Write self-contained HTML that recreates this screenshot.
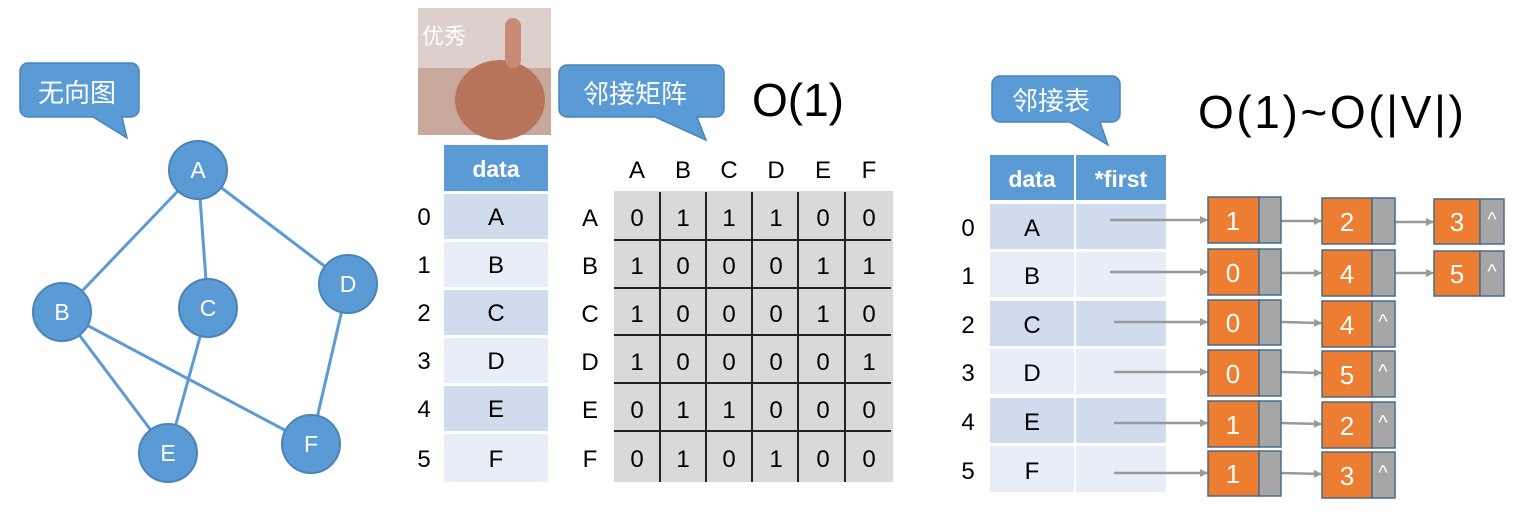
<!DOCTYPE html>
<html><head><meta charset="utf-8"><style>
html,body{margin:0;padding:0;background:#fff;width:1536px;height:518px;overflow:hidden}
text{font-family:"Liberation Sans","Noto Sans CJK SC",sans-serif}
</style></head><body>
<svg width="1536" height="518" viewBox="0 0 1536 518" xmlns="http://www.w3.org/2000/svg">
<defs><marker id="ar" markerWidth="8" markerHeight="8" refX="7" refY="4" orient="auto" markerUnits="userSpaceOnUse"><path d="M0,0 L8,4 L0,8 Z" fill="#999"/></marker></defs>
<g fill="#5b9bd5" stroke="#4a84b8" stroke-width="1.5">
<path d="M28,63 H131 a8,8 0 0 1 8,8 V109 a8,8 0 0 1 -8,8 H122 L127,138 L93,117 H28 a8,8 0 0 1 -8,-8 V71 a8,8 0 0 1 8,-8Z"/>
<path d="M567,65 H716 a8,8 0 0 1 8,8 V109 a8,8 0 0 1 -8,8 H697 L706,140 L655,117 H567 a8,8 0 0 1 -8,-8 V73 a8,8 0 0 1 8,-8Z"/>
<path d="M1000,76 H1112 a8,8 0 0 1 8,8 V114 a8,8 0 0 1 -8,8 H1100 L1108,145 L1070,122 H1000 a8,8 0 0 1 -8,-8 V84 a8,8 0 0 1 8,-8Z"/>
</g>
<g fill="#fff" font-size="26">
<text x="38" y="102">无向图</text>
<text x="583" y="103">邻接矩阵</text>
<text x="1012" y="110">邻接表</text>
</g>
<text x="752" y="116" font-size="46">O(1)</text>
<text x="1198" y="128" font-size="46" letter-spacing="2.6">O(1)~O(|V|)</text>
<rect x="418" y="8" width="133" height="127" fill="#c9a89c"/>
<rect x="418" y="8" width="133" height="60" fill="#ddd0cc"/>
<ellipse cx="500" cy="100" rx="45" ry="40" fill="#b8745a"/>
<rect x="505" y="18" width="16" height="50" rx="8" fill="#c98a75"/>
<text x="422" y="44" font-size="22" fill="#fff">优秀</text>
<g stroke="#5b9bd5" stroke-width="3">
<line x1="198" y1="170" x2="62" y2="312"/><line x1="198" y1="170" x2="208" y2="308"/>
<line x1="198" y1="170" x2="348" y2="284"/><line x1="62" y1="312" x2="168" y2="453"/>
<line x1="62" y1="312" x2="311" y2="444"/><line x1="208" y1="308" x2="168" y2="453"/>
<line x1="348" y1="284" x2="311" y2="444"/>
</g>
<g fill="#5b9bd5" stroke="#4a84b8" stroke-width="2">
<circle cx="198" cy="170" r="29"/><circle cx="62" cy="312" r="29"/><circle cx="208" cy="308" r="29"/>
<circle cx="348" cy="284" r="29"/><circle cx="168" cy="453" r="29"/><circle cx="311" cy="444" r="29"/>
</g>
<g fill="#fff" font-size="23" text-anchor="middle">
<text x="198" y="178">A</text><text x="62" y="320">B</text><text x="208" y="316">C</text>
<text x="348" y="292">D</text><text x="168" y="461">E</text><text x="311" y="452">F</text>
</g>
<rect x="444" y="145" width="104" height="46" fill="#5b9bd5"/>
<text x="496" y="177" font-size="23" font-weight="bold" fill="#fff" text-anchor="middle">data</text>
<g>
<rect x="444" y="194" width="104" height="45" fill="#d0dcee"/>
<rect x="444" y="242" width="104" height="45" fill="#e8eef7"/>
<rect x="444" y="290" width="104" height="45" fill="#d0dcee"/>
<rect x="444" y="338" width="104" height="45" fill="#e8eef7"/>
<rect x="444" y="386" width="104" height="45" fill="#d0dcee"/>
<rect x="444" y="434" width="104" height="48" fill="#e8eef7"/>
</g>
<g font-size="24" text-anchor="middle">
<text x="496" y="225">A</text><text x="496" y="273">B</text><text x="496" y="321">C</text>
<text x="496" y="369">D</text><text x="496" y="417">E</text><text x="496" y="467">F</text>
<text x="424" y="225">0</text><text x="424" y="273">1</text><text x="424" y="321">2</text>
<text x="424" y="369">3</text><text x="424" y="417">4</text><text x="424" y="467">5</text>
</g>
<rect x="614" y="191" width="279" height="291" fill="#d9d9d9"/>
<g stroke="#222" stroke-width="2">
<line x1="660" y1="192" x2="660" y2="482"/><line x1="706" y1="192" x2="706" y2="482"/>
<line x1="752" y1="192" x2="752" y2="482"/><line x1="798" y1="192" x2="798" y2="482"/>
<line x1="845" y1="192" x2="845" y2="482"/>
<line x1="614" y1="240" x2="891" y2="240"/><line x1="614" y1="288" x2="891" y2="288"/>
<line x1="614" y1="335" x2="891" y2="335"/><line x1="614" y1="383" x2="891" y2="383"/>
<line x1="614" y1="431" x2="891" y2="431"/>
</g>
<g font-size="24" text-anchor="middle">
<text x="637" y="178">A</text><text x="683" y="178">B</text><text x="729" y="178">C</text><text x="776" y="178">D</text><text x="823" y="178">E</text><text x="869" y="178">F</text>
<text x="590" y="226">A</text><text x="590" y="274">B</text><text x="590" y="322">C</text><text x="590" y="370">D</text><text x="590" y="418">E</text><text x="590" y="467">F</text>
<text x="637" y="226">0</text><text x="683" y="226">1</text><text x="729" y="226">1</text><text x="776" y="226">1</text><text x="823" y="226">0</text><text x="869" y="226">0</text>
<text x="637" y="274">1</text><text x="683" y="274">0</text><text x="729" y="274">0</text><text x="776" y="274">0</text><text x="823" y="274">1</text><text x="869" y="274">1</text>
<text x="637" y="322">1</text><text x="683" y="322">0</text><text x="729" y="322">0</text><text x="776" y="322">0</text><text x="823" y="322">1</text><text x="869" y="322">0</text>
<text x="637" y="370">1</text><text x="683" y="370">0</text><text x="729" y="370">0</text><text x="776" y="370">0</text><text x="823" y="370">0</text><text x="869" y="370">1</text>
<text x="637" y="418">0</text><text x="683" y="418">1</text><text x="729" y="418">1</text><text x="776" y="418">0</text><text x="823" y="418">0</text><text x="869" y="418">0</text>
<text x="637" y="467">0</text><text x="683" y="467">1</text><text x="729" y="467">0</text><text x="776" y="467">1</text><text x="823" y="467">0</text><text x="869" y="467">0</text>
</g>
<rect x="990" y="155" width="84" height="45" fill="#5b9bd5"/>
<rect x="1076" y="155" width="90" height="45" fill="#5b9bd5"/>
<text x="1032" y="187" font-size="23" font-weight="bold" fill="#fff" text-anchor="middle">data</text>
<text x="1121" y="187" font-size="23" font-weight="bold" fill="#fff" text-anchor="middle">*first</text>
<g>
<rect x="990" y="204" width="84" height="45" fill="#d0dcee"/><rect x="1076" y="204" width="90" height="45" fill="#d0dcee"/>
<rect x="990" y="252" width="84" height="45" fill="#e8eef7"/><rect x="1076" y="252" width="90" height="45" fill="#e8eef7"/>
<rect x="990" y="301" width="84" height="45" fill="#d0dcee"/><rect x="1076" y="301" width="90" height="45" fill="#d0dcee"/>
<rect x="990" y="349" width="84" height="45" fill="#e8eef7"/><rect x="1076" y="349" width="90" height="45" fill="#e8eef7"/>
<rect x="990" y="398" width="84" height="45" fill="#d0dcee"/><rect x="1076" y="398" width="90" height="45" fill="#d0dcee"/>
<rect x="990" y="446" width="84" height="46" fill="#e8eef7"/><rect x="1076" y="446" width="90" height="46" fill="#e8eef7"/>
</g>
<g font-size="24" text-anchor="middle">
<text x="1032" y="236">A</text><text x="1032" y="284">B</text><text x="1032" y="333">C</text><text x="1032" y="381">D</text><text x="1032" y="430">E</text><text x="1032" y="479">F</text>
<text x="968" y="236">0</text><text x="968" y="284">1</text><text x="968" y="333">2</text><text x="968" y="381">3</text><text x="968" y="430">4</text><text x="968" y="479">5</text>
</g>
<g stroke="#999" stroke-width="2.5" marker-end="url(#ar)">
<line x1="1110" y1="220" x2="1207" y2="220"/><line x1="1110" y1="272" x2="1207" y2="272"/>
<line x1="1114" y1="322" x2="1207" y2="322"/><line x1="1114" y1="372" x2="1207" y2="372"/>
<line x1="1114" y1="423" x2="1207" y2="423"/><line x1="1114" y1="473" x2="1207" y2="473"/>
<line x1="1281" y1="221" x2="1321" y2="221"/><line x1="1281" y1="273" x2="1321" y2="273"/>
<line x1="1281" y1="322" x2="1321" y2="323"/><line x1="1281" y1="372" x2="1321" y2="373"/>
<line x1="1281" y1="423" x2="1321" y2="424"/><line x1="1281" y1="473" x2="1321" y2="474"/>
<line x1="1395" y1="222" x2="1433" y2="222"/><line x1="1395" y1="273" x2="1433" y2="273"/>
</g>
<g stroke="#4a6a8a" stroke-width="1.5">
<g fill="#ed7d31">
<rect x="1208" y="197" width="51" height="46"/><rect x="1208" y="249" width="51" height="46"/>
<rect x="1208" y="300" width="51" height="45"/><rect x="1208" y="350" width="51" height="46"/>
<rect x="1208" y="401" width="51" height="46"/><rect x="1208" y="451" width="51" height="45"/>
<rect x="1322" y="198" width="50" height="46"/><rect x="1322" y="250" width="50" height="46"/>
<rect x="1322" y="301" width="50" height="46"/><rect x="1322" y="351" width="50" height="46"/>
<rect x="1322" y="402" width="50" height="46"/><rect x="1322" y="452" width="50" height="46"/>
<rect x="1434" y="199" width="46" height="45"/><rect x="1434" y="251" width="46" height="45"/>
</g>
<g fill="#a6a6a6">
<rect x="1259" y="197" width="22" height="46"/><rect x="1259" y="249" width="22" height="46"/>
<rect x="1259" y="300" width="22" height="45"/><rect x="1259" y="350" width="22" height="46"/>
<rect x="1259" y="401" width="22" height="46"/><rect x="1259" y="451" width="22" height="45"/>
<rect x="1372" y="198" width="23" height="46"/><rect x="1372" y="250" width="23" height="46"/>
<rect x="1372" y="301" width="23" height="46"/><rect x="1372" y="351" width="23" height="46"/>
<rect x="1372" y="402" width="23" height="46"/><rect x="1372" y="452" width="23" height="46"/>
<rect x="1480" y="199" width="24" height="45"/><rect x="1480" y="251" width="24" height="45"/>
</g>
</g>
<g fill="#fff" font-size="26" text-anchor="middle">
<text x="1233" y="230">1</text><text x="1233" y="282">0</text><text x="1233" y="332">0</text><text x="1233" y="383">0</text><text x="1233" y="434">1</text><text x="1233" y="483">1</text>
<text x="1347" y="231">2</text><text x="1347" y="283">4</text><text x="1347" y="334">4</text><text x="1347" y="384">5</text><text x="1347" y="435">2</text><text x="1347" y="485">3</text>
<text x="1457" y="231">3</text><text x="1457" y="283">5</text>
<g font-size="20">
<text x="1383" y="328">^</text><text x="1383" y="378">^</text><text x="1383" y="429">^</text><text x="1383" y="479">^</text>
<text x="1492" y="226">^</text><text x="1492" y="278">^</text>
</g>
</g>
</svg>
</body></html>
